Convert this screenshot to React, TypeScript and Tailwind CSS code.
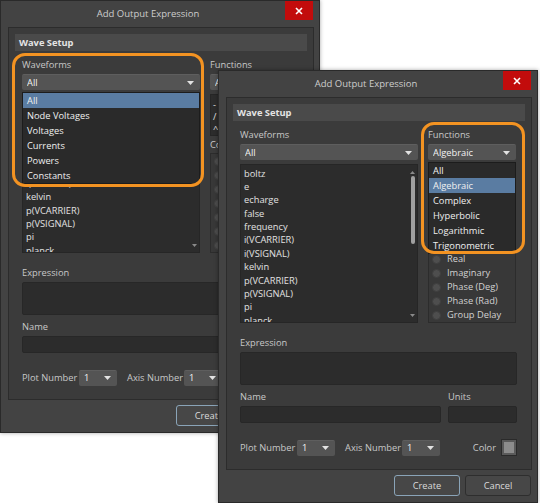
import React from 'react';

const waveformItems = [
  'boltz',
  'e',
  'echarge',
  'false',
  'frequency',
  'i(VCARRIER)',
  'i(VSIGNAL)',
  'kelvin',
  'p(VCARRIER)',
  'p(VSIGNAL)',
  'pi',
  'planck',
];

const functionItems = ['-', '/', '^', 'abs'];

const complexFunctions = ['Mag', 'Mag (dB)', 'Real', 'Imaginary', 'Phase (Deg)', 'Phase (Rad)', 'Group Delay'];

const waveformMenu = ['All', 'Node Voltages', 'Voltages', 'Currents', 'Powers', 'Constants'];
const functionMenu = ['All', 'Algebraic', 'Complex', 'Hyperbolic', 'Logarithmic', 'Trigonometric'];

function Caret() {
  return (
    <svg width="7" height="4" viewBox="0 0 7 4" className="shrink-0">
      <path d="M0 0 L7 0 L3.5 4 Z" fill="#e2e2e2" />
    </svg>
  );
}

function Select({ value, className }: { value: string; className: string }) {
  return (
    <div
      className={`flex items-center justify-between h-[16px] bg-[#545454] border-t border-[#5e5e5e] rounded-[2px] pl-[5px] pr-[6px] text-[#f2f2f2] ${className}`}
    >
      <span className="truncate">{value}</span>
      <Caret />
    </div>
  );
}

function Menu({ items, selected, className }: { items: string[]; selected: string; className: string }) {
  return (
    <div className={`absolute bg-[#2a2a2a] border border-[#1c1c1c] ${className}`}>
      {items.map((item) => (
        <div
          key={item}
          className={`h-[15px] leading-[15px] pl-[4px] text-[#f0f0f0] ${item === selected ? 'bg-[#5a7ca2]' : ''}`}
        >
          {item}
        </div>
      ))}
    </div>
  );
}

function Dialog({ menu, className }: { menu: 'waveforms' | 'functions'; className: string }) {
  return (
    <div
      className={`absolute w-[320px] h-[433px] flex flex-col bg-[#434343] border border-[#2a2a2a] shadow-[0_0_4px_rgba(0,0,0,0.35)] font-['Open_Sans',sans-serif] text-[9.3px] text-[#c8c8c8] ${className}`}
    >
      {/* Title bar */}
      <div className="flex h-[26px] shrink-0">
        <div className="flex-1 pl-[10px] pt-[6px] text-center text-[9.5px] text-[#cdcdcd]">Add Output Expression</div>
        <div className="flex items-center justify-center w-[28px] h-[19px] mr-[6px] bg-[#c20c0c]">
          <svg width="8" height="8" viewBox="0 0 8 8">
            <path d="M1 1 L7 7 M7 1 L1 7" stroke="#ffffff" strokeWidth="1.6" />
          </svg>
        </div>
      </div>

      {/* Wave Setup group */}
      <div className="ml-[7px] w-[306px] h-[373px] shrink-0 bg-[#3b3b3b] border border-[#2c2c2c] pt-[6px]">
        <div className="mx-[6px] h-[17px] leading-[17px] pl-[4px] bg-[#4a4a4a] font-bold text-[#e4e4e4]">Wave Setup</div>

        <div className="px-[13px]">
          <div className="flex gap-[10px] mt-[7px]">
            {/* Waveforms */}
            <div className="w-[178px] flex flex-col">
              <div className="h-[14px] leading-[14px]">Waveforms</div>
              <Select value="All" className="mt-[2px]" />
              <div className="mt-[4px] h-[159px] flex bg-[#2c2c2c] border border-[#262626] overflow-hidden">
                <div className="flex-1 pl-[3px] pt-[1.5px] text-[#e2e2e2]">
                  {waveformItems.map((w) => (
                    <div key={w} className="h-[13.4px] leading-[13.4px]">
                      {w}
                    </div>
                  ))}
                </div>
                <div className="w-[9px] flex flex-col items-center pt-[6px] pb-[5px]">
                  <svg width="5" height="3" viewBox="0 0 5 3">
                    <path d="M0 3 L5 3 L2.5 0 Z" fill="#8a8a8a" />
                  </svg>
                  <div className="mt-[2px] w-[4px] h-[68px] rounded-full bg-[#a0a0a0]" />
                  <div className="flex-1" />
                  <svg width="5" height="3" viewBox="0 0 5 3">
                    <path d="M0 0 L5 0 L2.5 3 Z" fill="#8a8a8a" />
                  </svg>
                </div>
              </div>
            </div>

            {/* Functions */}
            <div className="w-[88px] flex flex-col">
              <div className="h-[14px] leading-[14px]">Functions</div>
              <Select value="Algebraic" className="mt-[2px]" />
              <div className="mt-[4px] h-[42px] bg-[#2c2c2c] border border-[#262626] pt-[4px] pl-[2px] overflow-hidden text-[#e2e2e2]">
                {functionItems.map((f) => (
                  <div key={f} className="h-[12px] leading-[12px]">
                    {f}
                  </div>
                ))}
              </div>
              <div className="mt-[2px] h-[14px] leading-[14px] truncate">Complex Functions</div>
              <div className="mt-[1px] h-[100px] border border-[#2c2c2c] bg-[#383838] pl-[3px]">
                {complexFunctions.map((c) => (
                  <div key={c} className="flex items-center gap-[6px] h-[14px]">
                    <div className="w-[9px] h-[9px] rounded-full bg-[#4e4e4e] border border-[#3f3f3f]" />
                    <span className="text-[#d2d2d2]">{c}</span>
                  </div>
                ))}
              </div>
            </div>
          </div>

          <div className="mt-[13px] h-[14px] leading-[14px]">Expression</div>
          <div className="mt-[2px] h-[33px] w-[277px] bg-[#2c2c2c] border border-[#272727] rounded-[2px]" />

          <div className="mt-[5px] flex gap-[7px]">
            <div className="w-[201px]">
              <div className="h-[14px] leading-[14px]">Name</div>
              <div className="mt-[2px] h-[17px] bg-[#2c2c2c] border border-[#272727] rounded-[2px]" />
            </div>
            <div className="w-[69px]">
              <div className="h-[14px] leading-[14px]">Units</div>
              <div className="mt-[2px] h-[17px] bg-[#2c2c2c] border border-[#272727] rounded-[2px]" />
            </div>
          </div>

          <div className="mt-[16px] flex items-center h-[17px] w-[277px]">
            <span className="w-[57px]">Plot Number</span>
            <Select value="1" className="w-[38px]" />
            <span className="ml-[10px] w-[57px]">Axis Number</span>
            <Select value="1" className="w-[38px]" />
            <div className="flex-1" />
            <span>Color</span>
            <div className="ml-[5px] w-[16px] h-[17px] border border-[#2a2a2a] bg-[#5a5a5a] p-[2px]">
              <div className="w-full h-full bg-[#8c8c8c]" />
            </div>
          </div>
        </div>
      </div>

      {/* Buttons */}
      <div className="mt-[5px] flex justify-end gap-[5px] pr-[6px]">
        <button className="w-[66px] h-[21px] rounded-[3px] bg-[#474747] border border-[#8aa4b8] text-[#dadada]">Create</button>
        <button className="w-[66px] h-[21px] rounded-[3px] bg-[#474747] border border-[#2e2e2e] text-[#dadada]">Cancel</button>
      </div>

      {menu === 'waveforms' ? (
        <>
          <Menu items={waveformMenu} selected="All" className="left-[21px] top-[91px] w-[178px]" />
          <div className="absolute left-[11px] top-[52px] w-[192px] h-[134px] rounded-[13px] border-[3px] border-[#f39322]" />
        </>
      ) : (
        <>
          <Menu items={functionMenu} selected="Algebraic" className="left-[209px] top-[91px] w-[88px]" />
          <div className="absolute left-[202px] top-[51px] w-[104px] h-[132px] rounded-[13px] border-[3px] border-[#f39322]" />
        </>
      )}
    </div>
  );
}

export default function App() {
  return (
    <div className="relative w-[540px] h-[503px] bg-white overflow-hidden">
      <Dialog menu="waveforms" className="left-0 top-0" />
      <Dialog menu="functions" className="left-[218px] top-[70px]" />
    </div>
  );
}
